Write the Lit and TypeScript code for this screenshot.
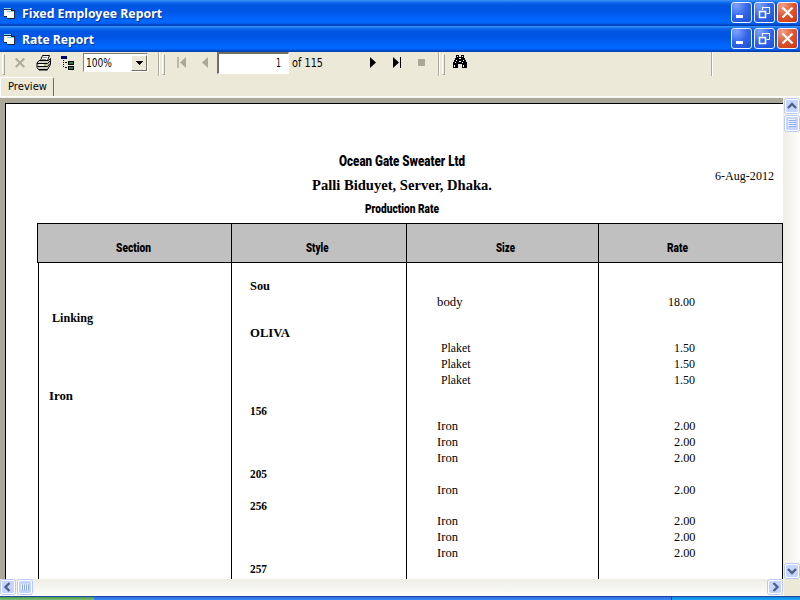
import { LitElement, html, svg, css } from "lit";
import { customElement, property } from "lit/decorators.js";

type Face = "serif" | "serif bold" | "impact" | "caption" | "ui";

/** One line of text set to an exact width; the baseline is 12px below the top. */
@customElement("fit-text")
class FitText extends LitElement {
  @property() text = "";
  @property() face: Face = "serif";
  @property({ type: Number }) w = 10;
  @property({ type: Number }) size = 12;
  static styles = css`
    :host { display: block; flex: none; height: 16px; }
    svg { display: block; overflow: visible; }
    text { fill: #000; font-family: "Liberation Serif", serif; }
    .bold { font-weight: 700; }
    .impact { font-family: Roboto, sans-serif; font-weight: 900; }
    .caption { font-family: "Noto Sans", sans-serif; font-weight: 700; fill: #fff; text-shadow: 1px 1px 0 #0a2f94; }
    .ui { font-family: "DejaVu Sans", sans-serif; }
  `;
  render() {
    return html`<svg width=${this.w} height="16"><text class=${this.face} x="0" y="12" font-size=${this.size}
      textLength=${this.w} lengthAdjust="spacingAndGlyphs">${this.text}</text></svg>`;
  }
}

@customElement("title-bar")
class TitleBar extends LitElement {
  @property() label = "";
  @property({ type: Number }) w = 100;
  static styles = css`
    :host { display: flex; height: 26px; box-sizing: border-box; padding: 0 2px 0 3px;
      background: linear-gradient(#3c92fa 0, #2c87f6 1px, #0a63ea 3px, #0055e0 6px, #0056e6 12px, #0064fa 18px, #0068ff 22px, #0058e4 24px, #0041b8 25px, #0040b0 26px); }
    .form { margin: 8px 6px 0 1px; }
    fit-text { margin-top: 6px; flex: 1; }
    .buttons { display: flex; gap: 2px; padding-top: 2px; }
    svg { display: block; flex: none; }
  `;
  render() {
    return html`
      <svg class="form" width="12" height="12" shape-rendering="crispEdges">
        <path d="M0 0h8v2h3v9h-8v-2h-3z" fill="#1c2340"/>
        <path d="M0 2h7v6h-7z" fill="#fff"/><path d="M0 0h7v1h-7z" fill="#8fd8e4"/>
        <path d="M3 4h7v6h-7z" fill="#fff"/><path d="M3 3h7v1h-7z" fill="#7accd8"/>
      </svg>
      <fit-text text=${this.label} face="caption" w=${this.w} size="12.6"></fit-text>
      <div class="buttons">
        ${["min", "max", "close"].map((k) => html`
          <svg width="21" height="21">
            <defs>
              <radialGradient id="b" cx=".25" cy=".15" r="1.1"><stop offset="0" stop-color="#7da3f7"/><stop offset=".5" stop-color="#3465ea"/><stop offset="1" stop-color="#1b50d2"/></radialGradient>
              <radialGradient id="r" cx=".25" cy=".15" r="1.1"><stop offset="0" stop-color="#f0a088"/><stop offset=".5" stop-color="#e0552f"/><stop offset="1" stop-color="#c5370f"/></radialGradient>
            </defs>
            <rect x=".5" y=".5" width="20" height="20" rx="2.5" fill=${k === "close" ? "url(#r)" : "url(#b)"} stroke="#eef3ff"/>
            ${k === "min" ? svg`<rect x="5" y="13" width="7" height="3" fill="#fff"/>` : null}
            ${k === "max" ? svg`<path d="M8.500 8v-2.500h7v6h-3M8 5.500h8" fill="none" stroke="#fff"/><path d="M5.500 9.500h6v6h-6zM5 9.500h7" fill="none" stroke="#fff" stroke-width="1.500"/>` : null}
            ${k === "close" ? svg`<path d="M5.500 5.500l10 10M15.500 5.500l-10 10" stroke="#fff" stroke-width="2.200"/>` : null}
          </svg>`)}
      </div>`;
  }
}

@customElement("tool-bar")
class ToolBar extends LitElement {
  static styles = css`
    :host { display: flex; height: 25px; background: #ece9d8; }
    svg { display: block; flex: none; }
    .grip { flex: none; width: 1px; height: 19px; margin-top: 2px; border: 1px solid; border-color: #fff #aca899 #aca899 #fff; background: #ece9d8; }
    .sep { flex: none; width: 1px; height: 24px; background: #aca899; border-right: 1px solid #fff; }
    .combo { display: flex; flex: none; box-sizing: border-box; width: 65px; height: 19px; margin-top: 1px; border: 1px solid; border-color: #808078 #fff #fff #808078; background: #fff; }
    .combo fit-text { margin: 1px 0 0 2px; flex: 1; }
    .drop { box-sizing: border-box; width: 16px; height: 16px; margin: 1px 0 0; border: 1px solid; border-color: #fff #716f64 #716f64 #fff; background: #ece9d8; }
    .page { flex: none; box-sizing: border-box; display: flex; justify-content: flex-end; width: 72px; height: 22px; border: 1px solid; border-width: 2px 1px 1px 2px; border-color: #716f64 #fff #fff #716f64; background: #fff; padding: 1px 7px 0 0; }
    .g1 { margin-left: 2px; } .i1 { margin-left: 10px; } .i2 { margin-left: 11px; } .i3 { margin-left: 9px; } .c1 { margin-left: 8px; }
    .s1 { margin-left: 10px; } .g2 { margin-left: 2px; } .n1 { margin-left: 12px; } .n2 { margin-left: 15px; } .p1 { margin-left: 9px; }
    .of { margin: 3px 0 0 3px; } .n3 { margin-left: 47px; } .n4 { margin-left: 17px; } .n5 { margin-left: 17px; }
    .s2 { margin-left: 13px; } .i4 { margin-left: 7px; } .s3 { margin-left: 243px; }
  `;
  render() {
    return html`
      <span class="grip g1"></span>
      <svg class="i1" width="10" height="22"><path d="M.7 6.500l8.600 8.600M9.300 6.500l-8.600 8.600" stroke="#aca899" stroke-width="2"/></svg>
      <svg class="i2" width="16" height="22"><path d="M4.500 8.500l2-5h7l-2 5z" fill="#fff" stroke="#000"/><path d="M7 5.500h4M6 7.500h4" stroke="#888"/>
        <path d="M3 8.500h9.500l2-2v6l-3 5h-9l-1.500-2v-4.500z" fill="#d0ceba" stroke="#000"/><path d="M1 11.500h10.500l3-3M1.500 14.500h10l2.500-3" stroke="#000" fill="none"/><path d="M3 13h5" stroke="#fff" stroke-width="1.500"/><path d="M8 13h2" stroke="#8a3"/><path d="M3 18h8.500" stroke="#000" fill="none"/></svg>
      <svg class="i3" width="14" height="22" shape-rendering="crispEdges"><path d="M0 4h6v3H0z" fill="#000060"/><path d="M2 8h1v1h-1zM2 10h1v1h-1zM2 12h1v1h-1zM2 14h1v1h-1zM4 10h2v1h-2zM4 15h2v1h-2z" fill="#000"/><path d="M7 9h6v4H7zM7 14h6v4H7z" fill="#000"/><path d="M8 10h4v2H8zM8 15h4v2H8z" fill="#2b7a4c"/></svg>
      <div class="combo c1"><fit-text text="100%" face="ui" w="26" size="11.5"></fit-text>
        <span class="drop"><svg width="14" height="14" shape-rendering="crispEdges"><path d="M4 5h7v1h-1v1h-1v1h-1v1h-1v-1h-1v-1h-1v-1h-1z"/></svg></span></div>
      <span class="sep s1"></span><span class="grip g2"></span>
      <svg class="n1" width="9" height="22"><path d="M1 5v11" stroke="#aca899" stroke-width="1.500"/><path d="M9 5v11l-6-5.500z" fill="#aca899"/></svg>
      <svg class="n2" width="7" height="22"><path d="M7 5v11l-6-5.500z" fill="#aca899"/></svg>
      <div class="page p1"><fit-text text="1" face="ui" w="5" size="11.5"></fit-text></div>
      <fit-text class="of" text="of 115" face="ui" w="31" size="11.5"></fit-text>
      <svg class="n3" width="6" height="22"><path d="M0 5v11l6-5.500z"/></svg>
      <svg class="n4" width="8" height="22"><path d="M0 5v11l6-5.500z"/><path d="M7.500 5v11" stroke="#000"/></svg>
      <svg class="n5" width="7" height="22"><path d="M0 7h7v7H0z" fill="#aca899"/></svg>
      <span class="sep s2"></span><span class="grip g2"></span>
      <svg class="i4" width="16" height="22" shape-rendering="crispEdges"><path d="M4 3h3v2h2v-2h3v3h1v2h1v2h1v6h-5v-4h-4v4h-5v-6h1v-2h1v-2h1z" fill="#000"/><path d="M5 4h1v1h-1zM10 4h1v1h-1zM4 8h1v1h-1zM11 8h1v1h-1zM3 10h1v1h-1zM10 10h1v1h-1zM2 13h1v2h-1zM11 13h1v2h-1zM7 6h2v1h-2zM7 9h2v1h-2z" fill="#fff"/></svg>
      <span class="sep s3"></span>`;
  }
}

@customElement("scroll-button")
class ScrollButton extends LitElement {
  @property() kind = "up";
  @property({ type: Number }) h = 16;
  static styles = css`
    :host { display: block; flex: none; } svg { display: block; }
    rect { fill: #c6d5fc; stroke: #fff; } .edge { fill: none; stroke: #b9c9f3; }
    .arrow { fill: none; stroke: #4d6185; stroke-width: 2.4; } .ridge { stroke: #8fabf0; } .shine { stroke: #eef4fe; }
  `;
  render() {
    const arrows: Record<string, string> = {
      up: "M4 10l4-4l4 4", down: "M4 6l4 4l4-4", left: "M9.500 4l-4 4l4 4", right: "M6.500 4l4 4l-4 4",
    };
    const a = arrows[this.kind];
    return html`<svg width="16" height=${this.h}>
      <rect class="edge" x=".5" y=".5" width="15" height=${this.h - 1} rx="2"/>
      <rect x="1.500" y="1.500" width="13" height=${this.h - 3} rx="1.500"/>
      ${a ? svg`<path class="arrow" d=${a}/>` : this.kind === "v"
        ? svg`<path class="shine" d="M4 4.500h7M4 6.500h7M4 8.500h7M4 10.500h7"/><path class="ridge" d="M5 5.500h7M5 7.500h7M5 9.500h7M5 11.500h7"/>`
        : svg`<path class="shine" d="M4.500 5v6M6.500 5v6M8.500 5v6M10.500 5v6"/><path class="ridge" d="M5.500 5.500v6M7.500 5.500v6M9.500 5.500v6M11.500 5.500v6"/>`}
    </svg>`;
  }
}

interface Line { section?: [string, number, number]; style?: [string, number]; size?: [string, number, number]; rate?: [string, number]; }

const iron: Line = { size: ["Iron", 21, 0], rate: ["2.00", 21.5] };
const plaket: Line = { size: ["Plaket", 29.5, 4], rate: ["1.50", 21] };
const LINES: Line[] = [
  { style: ["Sou", 20] },
  { size: ["body", 25.5, 0], rate: ["18.00", 27] },
  { section: ["Linking", 41, 3] },
  { style: ["OLIVA", 40] },
  plaket, plaket, plaket,
  { section: ["Iron", 24, 0] },
  { style: ["156", 17] },
  iron, iron, iron,
  { style: ["205", 17] },
  iron,
  { style: ["256", 17] },
  iron, iron, iron,
  { style: ["257", 17] },
];
/** Line heights as the report viewer rounds them at 100% zoom. */
const HEIGHTS = [16, 16, 15, 15, 16, 16, 16, 15, 15, 16, 16, 16, 16, 16, 15, 16, 16, 16, 16];

@customElement("report-page")
class ReportPage extends LitElement {
  static styles = css`
    :host { display: block; background: #fff; }
    .head { display: grid; height: 119px; box-sizing: border-box; }
    .titles, .date { grid-area: 1 / 1; }
    .titles { display: flex; flex-direction: column; align-items: center; padding: 50px 0 0 15px; }
    .palli { margin-top: 8px; } .prod { margin-top: 7px; }
    .date { justify-self: end; margin: 64px 9px 0 0; }
    .cols { display: grid; grid-template-columns: 193px 175px 192px 184px; }
    .th { grid-template-columns: 194px 175px 192px 183px; margin-left: 31px; height: 40px; box-sizing: border-box; background: #c0c0c0; border: 1px solid #000; }
    .th div { display: flex; border-right: 1px solid #000; padding-top: 16px; }
    .th div:last-child { border-right: 0; }
    .h0 { padding-left: 77.5px; } .h1 { padding-left: 73.5px; } .h2 { padding-left: 88.5px; } .h3 { padding-left: 67.5px; }
    .body { box-sizing: border-box; width: 745px; height: 316px; margin-left: 32px; padding-top: 15px; overflow: hidden; border: solid #000; border-width: 0 1px;
      background: linear-gradient(#000, #000) 192px 0 / 1px 100% no-repeat, linear-gradient(#000, #000) 367px 0 / 1px 100% no-repeat, linear-gradient(#000, #000) 559px 0 / 1px 100% no-repeat; }
    .section { padding-left: 10px; } .style { padding-left: 18px; } .size { padding-left: 30px; }
    .rate { display: flex; justify-content: flex-end; padding-right: 88px; }
    .in3 { margin-left: 3px; } .in4 { margin-left: 4px; }
  `;
  render() {
    const heads: [string, number][] = [["Section", 35], ["Style", 22.5], ["Size", 19], ["Rate", 21]];
    return html`
      <div class="head">
        <div class="titles">
          <fit-text text="Ocean Gate Sweater Ltd" face="impact" w="126" size="15.3"></fit-text>
          <fit-text class="palli" text="Palli Biduyet, Server, Dhaka." face="serif bold" w="180" size="14"></fit-text>
          <fit-text class="prod" text="Production Rate" face="impact" w="74" size="13"></fit-text>
        </div>
        <fit-text class="date" text="6-Aug-2012" w="59" size="13"></fit-text>
      </div>
      <div class="cols th">${heads.map(([t, w], i) => html`<div class="h${i}"><fit-text text=${t} face="impact" w=${w} size="13"></fit-text></div>`)}</div>
      <div class="body">
        ${LINES.map((l, i) => html`<div class="cols" style="height:${HEIGHTS[i]}px">
          <div class="section">${l.section ? html`<fit-text class="in${l.section[2]}" text=${l.section[0]} face="serif bold" w=${l.section[1]} size="13"></fit-text>` : null}</div>
          <div class="style">${l.style ? html`<fit-text text=${l.style[0]} face="serif bold" w=${l.style[1]} size="13"></fit-text>` : null}</div>
          <div class="size">${l.size ? html`<fit-text class="in${l.size[2]}" text=${l.size[0]} w=${l.size[1]} size="13"></fit-text>` : null}</div>
          <div class="rate">${l.rate ? html`<fit-text text=${l.rate[0]} w=${l.rate[1]} size="13"></fit-text>` : null}</div>
        </div>`)}
      </div>`;
  }
}

@customElement("app-root")
class AppRoot extends LitElement {
  static styles = css`
    :host { display: flex; flex-direction: column; width: 800px; height: 600px; overflow: hidden; background: #ece9d8; }
    title-bar, tool-bar { flex: none; }
    .tabs { flex: none; height: 19px; display: flex; }
    .tab { box-sizing: border-box; width: 54px; border-top: 1px solid #fff; border-left: 1px solid #fff; border-right: 1px solid #716f64; padding: 0 0 0 7px; border-radius: 2px 2px 0 0; }
    .tab fit-text { margin-top: 0; }
    .edge { flex: none; height: 2px; background: linear-gradient(#fff 1px, #f6f4ec 1px); }
    .view { display: flex; height: 481px; }
    .desk { flex: 1; box-sizing: border-box; background: #aca899; padding-top: 5px; }
    .paper { height: 476px; margin-left: 5px; box-sizing: border-box; border-top: 1px solid #000; border-left: 1px solid #000; overflow: hidden; }
    .vs { width: 17px; box-sizing: border-box; padding: 0 0 0 1px; display: flex; flex-direction: column; gap: 1px; background: linear-gradient(90deg, #eeede5, #fefefb); }
    .hs { flex: none; display: flex; gap: 1px; height: 17px; background: linear-gradient(#eeede5, #fefefb); }
    .space { flex: 1; }
    .corner { width: 16px; background: #ece9d8; }
    .task { flex: none; height: 4px; display: flex; border-top: 1px solid #1f48a0; box-sizing: border-box; }
    .start { width: 94px; background: linear-gradient(#4b9a4b, #7dc07a); }
    .bar { flex: 1; background: linear-gradient(#2a70de, #3c88f4); }
    .tray { width: 128px; border-left: 1px solid #0b3f96; background: linear-gradient(#1284e0, #19a8f4); }
  `;
  render() {
    return html`
      <title-bar label="Fixed Employee Report" w="140"></title-bar>
      <title-bar label="Rate Report" w="72"></title-bar>
      <tool-bar></tool-bar>
      <div class="tabs"><div class="tab"><fit-text text="Preview" face="ui" w="39" size="11"></fit-text></div></div>
      <div class="edge"></div>
      <div class="view">
        <div class="desk"><div class="paper"><report-page></report-page></div></div>
        <div class="vs"><scroll-button kind="up"></scroll-button><scroll-button kind="v" h="17"></scroll-button><span class="space"></span><scroll-button kind="down"></scroll-button></div>
      </div>
      <div class="hs"><scroll-button kind="left"></scroll-button><scroll-button kind="h"></scroll-button><span class="space"></span><scroll-button kind="right"></scroll-button><span class="corner"></span></div>
      <div class="task"><div class="start"></div><div class="bar"></div><div class="tray"></div></div>`;
  }
}
